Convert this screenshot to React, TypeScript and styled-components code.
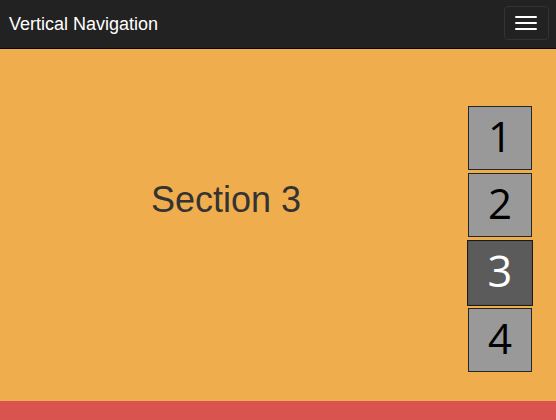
import React from 'react';
import styled, { createGlobalStyle } from 'styled-components';

const GlobalStyle = createGlobalStyle`
  html, body {
    margin: 0;
    padding: 0;
    overflow: hidden;
    font-family: 'Liberation Sans', Arial, sans-serif;
  }
  * {
    box-sizing: border-box;
  }
`;

const Navbar = styled.nav`
  height: 49px;
  background-color: #222;
  border-bottom: 1px solid #080808;
  display: flex;
  align-items: center;
  justify-content: space-between;
  padding: 0 7px 0 9px;
`;

const Brand = styled.a`
  color: #fff;
  font-size: 18px;
  line-height: 20px;
  text-decoration: none;
  margin-top: -1px;
`;

const Toggle = styled.button`
  width: 45px;
  height: 34px;
  margin-top: -3px;
  padding: 9px 10px;
  background: transparent;
  border: 1px solid #333;
  border-radius: 4px;
  display: flex;
  flex-direction: column;
  justify-content: center;
  gap: 4px;
`;

const IconBar = styled.span`
  display: block;
  width: 22px;
  height: 2px;
  border-radius: 1px;
  background-color: #fff;
`;

const Section = styled.section<{ bg: string; h: number }>`
  display: flex;
  background-color: ${(p) => p.bg};
  height: ${(p) => p.h}px;
`;

const Content = styled.div`
  flex: 1;
  text-align: center;
  padding-top: 130px;
`;

const Heading = styled.h1`
  margin: 0;
  font-size: 36px;
  line-height: 41px;
  font-weight: 400;
  color: #333;
`;

const SideNav = styled.ul`
  list-style: none;
  margin: 0;
  padding: 57px 24px 0 16px;
  display: flex;
  flex-direction: column;
  gap: 3.4px;
`;

const NavItem = styled.li<{ active?: boolean }>`
  width: 64px;
  height: 64px;
  border: 1px solid rgba(0, 0, 0, 0.75);
  background-color: ${(p) => (p.active ? '#5b5b5b' : '#999')};
  color: ${(p) => (p.active ? '#fff' : '#000')};
  font-family: 'Open Sans', 'Noto Sans', sans-serif;
  font-size: 42px;
  line-height: 58px;
  text-align: center;
  transform: ${(p) => (p.active ? 'scale(1.03)' : 'none')};
`;

const items = [1, 2, 3, 4];

export default function App() {
  const current = 3;
  return (
    <>
      <GlobalStyle />
      <Navbar>
        <Brand href="#">Vertical Navigation</Brand>
        <Toggle aria-label="Toggle navigation">
          <IconBar />
          <IconBar />
          <IconBar />
        </Toggle>
      </Navbar>
      <Section bg="#f0ad4e" h={352}>
        <Content>
          <Heading>Section {current}</Heading>
        </Content>
        <SideNav>
          {items.map((n) => (
            <NavItem key={n} active={n === current}>
              {n}
            </NavItem>
          ))}
        </SideNav>
      </Section>
      <Section bg="#d9534f" h={19} />
    </>
  );
}
